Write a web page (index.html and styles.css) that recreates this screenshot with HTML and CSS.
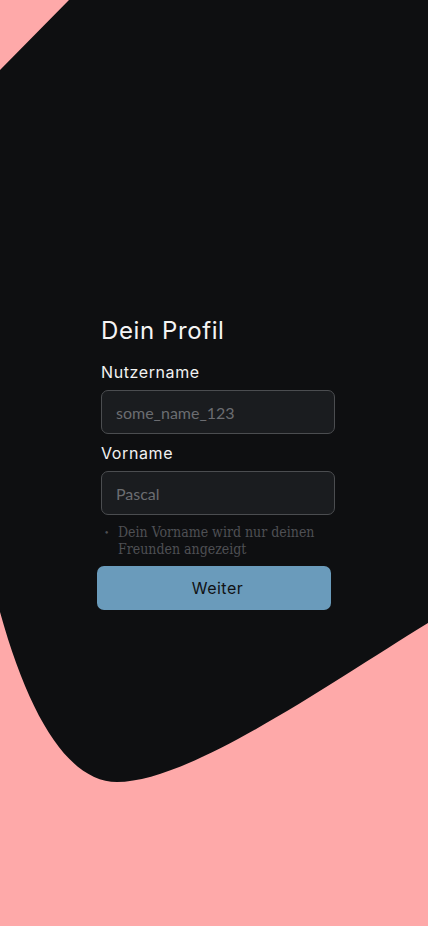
FILE: index.html
```html
<!DOCTYPE html>
<html lang="de">
<head>
<meta charset="utf-8">
<meta name="viewport" content="width=device-width, initial-scale=1">
<title>Dein Profil</title>
<link rel="stylesheet" href="styles.css">
</head>
<body>
<main class="screen">
  <svg class="backdrop" viewBox="0 0 428 926" preserveAspectRatio="none" aria-hidden="true">
    <path d="M69 0 L428 0 L428 623 C330 683 190 782 117 782 C70 782 30 720 0 612 L0 70 Z" fill="#0e0f11"/>
  </svg>
  <form class="profile-form">
    <h1 class="title">Dein Profil</h1>
    <label class="field-label" for="username">Nutzername</label>
    <input class="field-input" id="username" type="text" placeholder="some_name_123">
    <label class="field-label second" for="firstname">Vorname</label>
    <input class="field-input" id="firstname" type="text" placeholder="Pascal">
    <ul class="hints">
      <li class="hint"><span class="bullet">•</span><span>Dein Vorname wird nur deinen Freunden angezeigt</span></li>
    </ul>
    <button class="submit" type="button">Weiter</button>
  </form>
</main>
</body>
</html>
```
FILE: styles.css
```css
* { box-sizing: border-box; }
html, body { margin: 0; padding: 0; }
body { background: #fea9a9; }

.screen {
  position: relative;
  width: 428px;
  height: 926px;
  overflow: hidden;
  background: #fea9a9;
  display: flex;
  align-items: flex-start;
  justify-content: center;
}

.backdrop {
  position: absolute;
  inset: 0;
  width: 100%;
  height: 100%;
}

.profile-form {
  position: relative;
  width: 234px;
  margin-top: 316px;
  display: flex;
  flex-direction: column;
}

.title {
  margin: 0 0 0 4px;
  font-family: "Inter", "Noto Sans", sans-serif;
  font-weight: 400;
  font-size: 24px;
  line-height: 30px;
  letter-spacing: 0.6px;
  color: #f4f4f4;
}

.field-label {
  margin: 16px 0 0 4px;
  font-family: "Inter", "Noto Sans", sans-serif;
  font-size: 16px;
  line-height: 20px;
  letter-spacing: 0.6px;
  color: #f2f2f2;
}
.field-label.second { margin-top: 9px; }

.field-input {
  margin: 8px 0 0 4px;
  width: 234px;
  height: 44px;
  padding: 0 14px;
  border: 1px solid #4b4d50;
  border-radius: 7px;
  background: #1a1c1f;
  color: #e6e6e6;
  font-family: "Lato", sans-serif;
  font-size: 16px;
  outline: none;
}
.field-input::placeholder { color: #6b6d71; }

.hints {
  list-style: none;
  margin: 9px 0 0 4px;
  padding: 0;
}
.hint {
  display: flex;
  gap: 8px;
  font-family: "DejaVu Serif Condensed", "DejaVu Serif", serif;
  font-size: 14px;
  line-height: 17px;
  color: #4e5054;
}
.bullet {
  width: 9px;
  padding-left: 3px;
  font-size: 10px;
  flex: none;
}

.submit {
  margin-top: 8px;
  width: 234px;
  height: 44px;
  border: none;
  border-radius: 7px;
  background: #6a9bbb;
  color: #111214;
  font-family: "Inter", "Noto Sans", sans-serif;
  font-size: 16px;
  letter-spacing: 0.5px;
  padding: 0 0 0 7px;
  cursor: pointer;
}
```
